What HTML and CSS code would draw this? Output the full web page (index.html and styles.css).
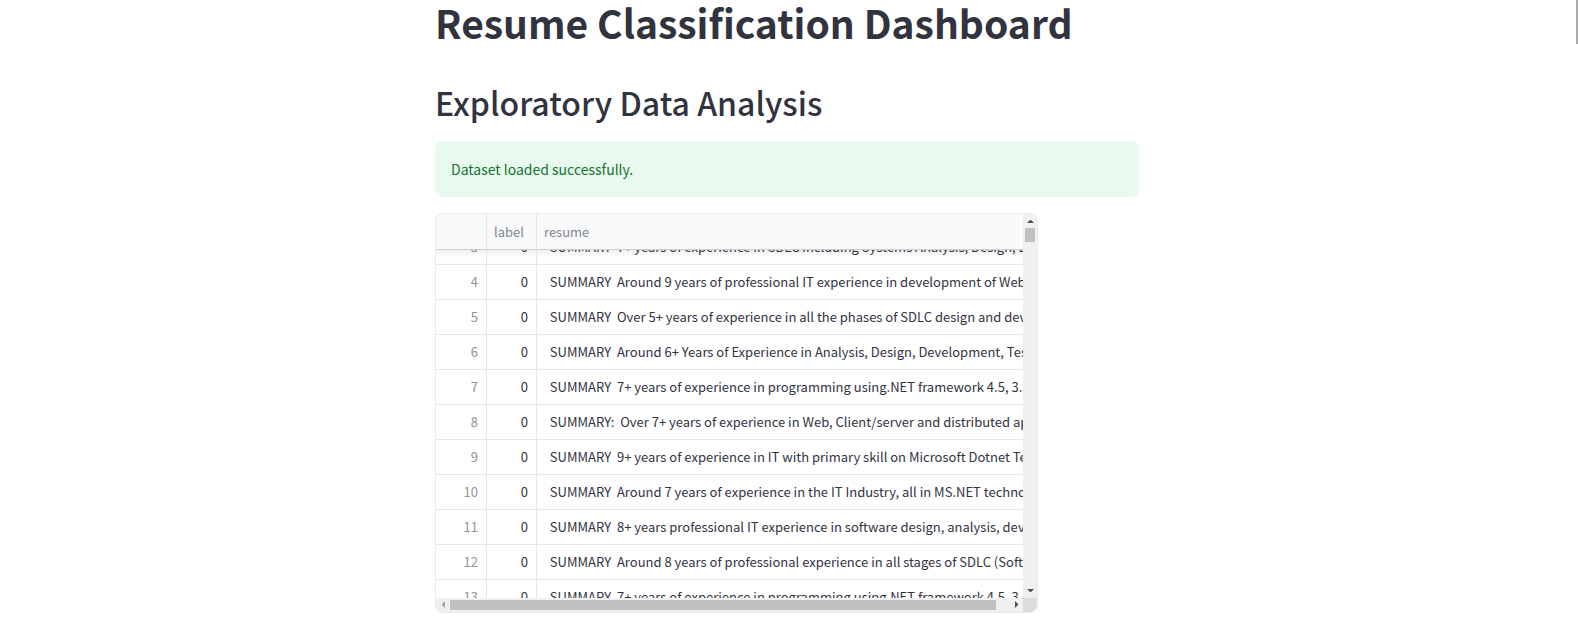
FILE: index.html
```html
<!DOCTYPE html>
<html lang="en">
<head>
<meta charset="utf-8">
<title>Resume Classification Dashboard</title>
<link rel="stylesheet" href="styles.css">
</head>
<body>
<main class="page">
  <h1 class="title">Resume Classification Dashboard</h1>
  <h2 class="heading">Exploratory Data Analysis</h2>
  <div class="alert" role="alert">Dataset loaded successfully.</div>
  <div class="frame">
    <div class="viewport">
      <table class="grid">
        <colgroup><col class="col-index"><col class="col-label"><col class="col-resume"></colgroup>
        <thead>
          <tr><th></th><th>label</th><th>resume</th></tr>
        </thead>
        <tbody>
          <tr class="partial"><td><div>3</div></td><td><div>0</div></td><td><div>  SUMMARY  7+ years of experience in SDLC including Systems Analysis, Design, Development</div></td></tr>
          <tr><td>4</td><td>0</td><td>  SUMMARY  Around 9 years of professional IT experience in development of Web - b</td></tr>
          <tr><td>5</td><td>0</td><td>  SUMMARY  Over 5+ years of experience in all the phases of SDLC design and develo</td></tr>
          <tr><td>6</td><td>0</td><td>  SUMMARY  Around 6+ Years of Experience in Analysis, Design, Development, Testin</td></tr>
          <tr><td>7</td><td>0</td><td>  SUMMARY  7+ years of experience in programming using.NET framework 4.5, 3.5, 2</td></tr>
          <tr><td>8</td><td>0</td><td>  SUMMARY:  Over 7+ years of experience in Web, Client/server and distributed appl</td></tr>
          <tr><td>9</td><td>0</td><td>  SUMMARY  9+ years of experience in IT with primary skill on Microsoft Dotnet Tech</td></tr>
          <tr><td>10</td><td>0</td><td>  SUMMARY  Around 7 years of experience in the IT Industry, all in MS.NET technolog</td></tr>
          <tr><td>11</td><td>0</td><td>  SUMMARY  8+ years professional IT experience in software design, analysis, develo</td></tr>
          <tr><td>12</td><td>0</td><td>  SUMMARY  Around 8 years of professional experience in all stages of SDLC (Softwa</td></tr>
          <tr><td>13</td><td>0</td><td>  SUMMARY  7+ years of experience in programming using.NET framework 4.5, 3.5, 2</td></tr>
        </tbody>
      </table>
    </div>
    <div class="vbar">
      <svg class="arrow" viewBox="0 0 14 14"><path d="M4 9h7L8 6H7z" fill="#505050"/></svg>
      <div class="vthumb"></div>
      <svg class="arrow arrow-end" viewBox="0 0 14 14"><path d="M4 5h7L8 8H7z" fill="#505050"/></svg>
    </div>
    <div class="hbar">
      <svg class="arrow" viewBox="0 0 14 14"><path d="M9 3v7L6 7V6z" fill="#a3a3a3"/></svg>
      <div class="hthumb"></div>
      <svg class="arrow arrow-end" viewBox="0 0 14 14"><path d="M6 3v7L9 7V6z" fill="#505050"/></svg>
    </div>
    <div class="corner"></div>
  </div>
</main>
<div class="page-thumb"></div>
</body>
</html>
```
FILE: styles.css
```css
* { box-sizing: border-box; }
body {
  margin: 0;
  padding-right: 4px;
  background: #fff;
  color: #31333f;
  font-family: "Noto Sans CJK SC", "Open Sans", sans-serif;
  overflow: hidden;
}
.page { max-width: 704px; margin: 0 auto; }
.title, .heading { margin: 0; white-space: nowrap; }
.title { font-size: 39px; font-weight: 700; line-height: 44px; }
.heading { font-size: 32px; font-weight: 500; line-height: 44px; margin-top: 36px; }
.alert {
  margin-top: 17px;
  padding: 16px;
  border-radius: 8px;
  background: #e8f9ee;
  color: #177233;
  font-size: 14px;
  line-height: 24px;
}
.frame {
  display: grid;
  grid-template: 384px 14px / 1fr 14px;
  width: 86%;
  max-width: 603px;
  margin-top: 16px;
  border: 1px solid #e9eaeb;
  border-radius: 8px;
  overflow: hidden;
}
.viewport { overflow: hidden; min-width: 0; }
.grid {
  width: 100%;
  table-layout: fixed;
  border-collapse: separate;
  border-spacing: 0;
  font-size: 13px;
  line-height: 34px;
}
.col-index { width: 51px; }
.col-label { width: 50px; }
.grid th, .grid td {
  padding: 0 8px 0 7px;
  border-right: 1px solid #e6e6e8;
  border-bottom: 1px solid #e9e9eb;
  white-space: pre;
  overflow: hidden;
  text-align: right;
}
.grid th {
  height: 36px;
  background: #f8f9fb;
  border-bottom-color: #cdcdcf;
  color: #84858d;
  font-weight: 400;
  text-align: left;
}
.grid td { height: 35px; }
.grid td:first-child { color: #909199; }
.grid th:last-child, .grid td:last-child {
  padding-right: 0;
  border-right: 0;
  text-align: left;
}
.grid .partial td {
  height: 15px;
  background: linear-gradient(#f0f0f1, #fff 8px);
}
.partial div {
  display: flex;
  align-items: flex-end;
  justify-content: flex-end;
  height: 14px;
  overflow: hidden;
}
.partial td:last-child div { justify-content: flex-start; }
.vbar, .hbar { display: flex; background: #f0f0f0; }
.vbar { flex-direction: column; align-items: center; }
.hbar { align-items: center; }
.arrow { flex: none; width: 14px; height: 14px; }
.arrow-end { margin-top: auto; }
.hbar .arrow-end { margin: 0 0 0 auto; }
.vthumb { width: 10px; height: 14px; background: #c1c1c1; }
.hthumb { width: 93%; height: 10px; background: #c1c1c1; }
.corner { background: #dcdcdc; }
.page-thumb {
  position: absolute;
  top: 0;
  right: 0;
  width: 2px;
  height: 44px;
  background: #a9a9ae;
}
```
